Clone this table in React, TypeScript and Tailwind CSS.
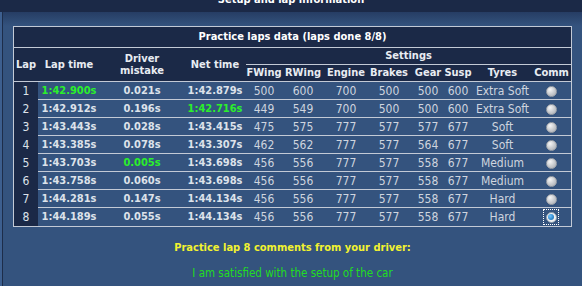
const laps = [
  { lap: 1, time: "1:42.900s", mistake: "0.021s", net: "1:42.879s", s: [500, 600, 700, 500, 500, 600], tyres: "Extra Soft", best: "time" },
  { lap: 2, time: "1:42.912s", mistake: "0.196s", net: "1:42.716s", s: [449, 549, 700, 500, 500, 600], tyres: "Extra Soft", best: "net" },
  { lap: 3, time: "1:43.443s", mistake: "0.028s", net: "1:43.415s", s: [475, 575, 777, 577, 577, 677], tyres: "Soft" },
  { lap: 4, time: "1:43.385s", mistake: "0.078s", net: "1:43.307s", s: [462, 562, 777, 577, 564, 677], tyres: "Soft" },
  { lap: 5, time: "1:43.703s", mistake: "0.005s", net: "1:43.698s", s: [456, 556, 777, 577, 558, 677], tyres: "Medium", best: "mistake" },
  { lap: 6, time: "1:43.758s", mistake: "0.060s", net: "1:43.698s", s: [456, 556, 777, 577, 558, 677], tyres: "Medium" },
  { lap: 7, time: "1:44.281s", mistake: "0.147s", net: "1:44.134s", s: [456, 556, 777, 577, 558, 677], tyres: "Hard" },
  { lap: 8, time: "1:44.189s", mistake: "0.055s", net: "1:44.134s", s: [456, 556, 777, 577, 558, 677], tyres: "Hard" },
];

const settings = ["FWing", "RWing", "Engine", "Brakes", "Gear", "Susp"];

const cols = "grid grid-cols-[24px_62px_84px_62px_36px_42px_44px_42px_36px_24px_65px_36px]";

function Radio({ on }: { on?: boolean }) {
  if (on) {
    return (
      <div className="flex h-[14px] w-[14px] items-center justify-center outline-1 outline-dotted outline-white">
        <div className="flex h-[11px] w-[11px] items-center justify-center rounded-full border border-[#8a9aaa] bg-[#eef0f2]">
          <div className="h-[6px] w-[6px] rounded-full bg-[radial-gradient(circle_at_35%_35%,#6ec4ff,#0a5fa8)]" />
        </div>
      </div>
    );
  }
  return (
    <div className="h-[11px] w-[11px] rounded-full border border-[#9ea3aa] bg-[radial-gradient(circle_at_35%_30%,#f6f6f6,#c6c9cd_55%,#a9adb3)]" />
  );
}

export default function App() {
  return (
    <div className="flex h-[286px] w-[582px] flex-col overflow-hidden bg-[#34537e] font-['DejaVu_Sans_Condensed','DejaVu_Sans',sans-serif]">
      <div className="h-[12px] overflow-hidden bg-[#1b2947] text-center">
        <div className="mt-[-6px] text-[11px] leading-[12px] font-bold text-white">Setup and lap information</div>
      </div>
      <div className="flex flex-1">
        <div className="w-[2px] bg-[#3d5f8f]" />
        <div className="w-[1px] bg-[#1d2d4a]" />
        <div className="flex-1 bg-[linear-gradient(to_bottom,#263d64_0px,#34537e_14px)] pl-[10px] pt-[14px]">
          <div className="w-[559px] border border-[#c3cad6] text-[#dde2ea]">
            <div className="flex h-[21px] items-center justify-center border-b border-[#c3cad6] bg-[#1b2947] text-[11px] font-bold text-white">
              Practice laps data (laps done 8/8)
            </div>
            <div className={`${cols} grid-rows-[17px_17px] bg-[#1b2947] text-[11px] leading-[12px] font-bold text-[#e8ecf2]`}>
              <div className="row-span-2 flex items-center justify-center border-b border-[#c3cad6]">Lap</div>
              <div className="row-span-2 flex items-center justify-center border-b border-[#c3cad6]">Lap time</div>
              <div className="row-span-2 flex flex-col items-center justify-center border-b border-[#c3cad6]">
                <span>Driver</span>
                <span>mistake</span>
              </div>
              <div className="row-span-2 flex items-center justify-center border-b border-[#c3cad6]">Net time</div>
              <div className="col-span-8 flex items-center justify-center border-b border-[#c3cad6]">Settings</div>
              {settings.map((s) => (
                <div key={s} className="flex items-center justify-center border-b border-[#c3cad6]">{s}</div>
              ))}
              <div className="flex items-center justify-center border-b border-[#c3cad6]">Tyres</div>
              <div className="flex items-center justify-center border-b border-[#c3cad6] pr-[3px]">Comm</div>
            </div>
            {laps.map((r, i) => {
              const line = i < laps.length - 1 ? "border-b border-[#c3cad6]" : "";
              return (
                <div key={r.lap} className={`${cols} h-[18px] ${line}`}>
                  <div className="flex items-center justify-center bg-[#1b2947] text-[12px]">{r.lap}</div>
                  <div className={`flex items-center justify-center text-[11px] font-bold ${r.best === "time" ? "text-[#2bef2b]" : ""}`}>{r.time}</div>
                  <div className={`flex items-center justify-center text-[11px] font-bold ${r.best === "mistake" ? "text-[#2bef2b]" : ""}`}>{r.mistake}</div>
                  <div className={`flex items-center justify-center text-[11px] font-bold ${r.best === "net" ? "text-[#2bef2b]" : ""}`}>{r.net}</div>
                  {r.s.map((v, k) => (
                    <div key={k} className="flex items-center justify-center text-[12px] text-[#cfd5df]">{v}</div>
                  ))}
                  <div className="flex items-center justify-center text-[12px] text-[#cfd5df]">{r.tyres}</div>
                  <div className="flex items-center justify-center pr-[4px]">
                    <Radio on={r.lap === 8} />
                  </div>
                </div>
              );
            })}
          </div>
          <div className="mt-[15px] w-[559px] text-center text-[11px] leading-[12px] font-bold text-[#f2f230]">
            Practice lap 8 comments from your driver:
          </div>
          <div className="mt-[13px] w-[559px] text-center text-[11.5px] leading-[12px] text-[#22dd22]">
            I am satisfied with the setup of the car
          </div>
        </div>
      </div>
    </div>
  );
}
